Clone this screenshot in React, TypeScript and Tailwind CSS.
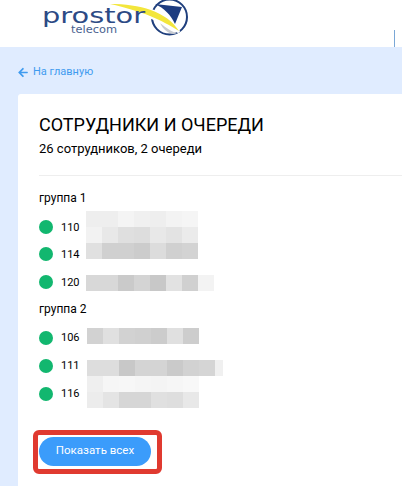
import { FaArrowLeft } from "react-icons/fa";

interface Queue {
  title: string;
  exts: string[];
  rowClass: string;
  maskClass: string;
  mask: string[][];
}

// blurred-out names, one array per 16px strip of pixels
const QUEUES: Queue[] = [
  {
    title: "группа 1",
    exts: ["110", "114", "120"],
    rowClass: "h-[27.5px]",
    maskClass: "pt-[4px]",
    mask: [
      ["bg-[#eeeeee]", "bg-[#eeeeee]", "bg-[#f4f4f4]", "bg-[#f0f0f0]", "bg-[#eeeeee]", "bg-[#f3f3f3]", "bg-[#f5f5f5]"],
      ["bg-[#f2f2f2]", "bg-[#e8e8e8]", "bg-[#dfdfdf]", "bg-[#dddddd]", "bg-[#e8e8e8]", "bg-[#e3e3e3]", "bg-[#ebebeb]"],
      ["bg-[#e0e0e0]", "bg-[#d0d0d0]", "bg-[#d0d0d0]", "bg-[#cccccc]", "bg-[#dcdcdc]", "bg-[#d0d0d0]", "bg-[#d3d3d3]"],
      [],
      ["bg-[#d8d8d8]", "bg-[#d8d8d8]", "bg-[#cacaca]", "bg-[#d4d4d4]", "bg-[#c8c8c8]", "bg-[#e2e2e2]", "bg-[#d0d0d0]", "bg-[#f3f3f3]"],
    ],
  },
  {
    title: "группа 2",
    exts: ["106", "111", "116"],
    rowClass: "h-[28px]",
    maskClass: "pt-[10px] pl-px",
    mask: [
      ["bg-[#d2d2d2]", "bg-[#e0e0e0]", "bg-[#d2d2d2]", "bg-[#d0d0d0]", "bg-[#cccccc]", "bg-[#e0e0e0]", "bg-[#cdcdcd]"],
      [],
      ["bg-[#dddddd]", "bg-[#dddddd]", "bg-[#c8c8c8]", "bg-[#d4d4d4]", "bg-[#d4d4d4]", "bg-[#cacaca]", "bg-[#d2d2d2]", "bg-[#d5d5d5]", "bg-[#f0f0f0] !w-2"],
      ["bg-[#efefef]", "bg-[#f6f6f6]", "bg-[#f7f7f7]", "bg-[#f5f5f5]", "bg-[#f4f4f4]", "bg-[#f6f6f6]", "bg-[#f8f8f8]"],
      ["bg-[#ececec]", "bg-[#e4e4e4]", "bg-[#d6d6d6]", "bg-[#d6d6d6]", "bg-[#e0e0e0]", "bg-[#dedede]", "bg-[#e8e8e8]"],
    ],
  },
];

function Logo() {
  return (
    <svg width="160" height="37" viewBox="0 0 160 37" className="ml-[38px]">
      <circle cx="131.5" cy="17" r="17.5" fill="none" stroke="#1f3f7d" strokeWidth="2" />
      <path d="M122 23 C128 28 134 32 139 33 C133 36 126 31 122 23 Z" fill="#c9ccd2" />
      <path d="M70 4 C102 4 128 11 141 32 C124 21 104 11 70 4 Z" fill="#fff" stroke="#fff" strokeWidth="3" />
      <path d="M72 4 C102 4 128 11 141 31 C124 20 104 11 72 4 Z" fill="#f3e63c" />
      <path d="M117 4 L144 7 L137 24 C133 15 126 8 117 4 Z" fill="#1d3c80" />
      <text
        x="4"
        y="23"
        fontFamily="'DejaVu Sans', sans-serif"
        fontSize="21"
        fill="#2c4a85"
        textLength="103"
        lengthAdjust="spacingAndGlyphs"
      >
        prostor
      </text>
      <text
        x="33"
        y="33"
        fontFamily="'DejaVu Sans', sans-serif"
        fontSize="11"
        fill="#4a6290"
        textLength="46"
        lengthAdjust="spacingAndGlyphs"
      >
        telecom
      </text>
    </svg>
  );
}

export default function App() {
  return (
    <div className="h-[486px] overflow-hidden bg-[#e0ecff] font-['Roboto',sans-serif] text-black">
      <header className="flex h-[47px] items-start justify-between bg-white pr-[7px]">
        <Logo />
        <div className="mt-[30px] h-[17px] w-px bg-[#7aa7d6]" />
      </header>

      <a className="flex h-[47px] items-center gap-[5px] pl-[18px] pt-[4px] text-[11px] text-[#3f9bef]">
        <FaArrowLeft className="h-[11px] w-[10px]" />
        <span>На главную</span>
      </a>

      <main className="ml-[18px] h-[392px] rounded-tl-[3px] bg-white pl-[21px] pt-[19px]">
        <h1 className="text-[18px] leading-[24px]">СОТРУДНИКИ И ОЧЕРЕДИ</h1>
        <p className="mt-[3px] text-[13px] leading-[17px]">26 сотрудников, 2 очереди</p>
        <div className="mt-[18px] h-px bg-[#eeeeee]" />

        <div className="mt-[14px] flex flex-col gap-[5px]">
          {QUEUES.map((queue) => (
            <section key={queue.title}>
              <div className="text-[12px] leading-[17px]">{queue.title}</div>
              <div className="flex">
                <ul className="w-[47px] pt-[6px]">
                  {queue.exts.map((ext) => (
                    <li key={ext} className={`flex items-center gap-2 text-[11px] ${queue.rowClass}`}>
                      <span className="h-[14px] w-[14px] rounded-full bg-[#12b76f]" />
                      <span className="pt-[2px]">{ext}</span>
                    </li>
                  ))}
                </ul>
                <div className={queue.maskClass}>
                  {queue.mask.map((strip, i) => (
                    <div key={i} className="flex h-4">
                      {strip.map((cell, j) => (
                        <div key={j} className={`w-4 ${cell}`} />
                      ))}
                    </div>
                  ))}
                </div>
              </div>
            </section>
          ))}
        </div>

        <div className="ml-[-6px] mt-[22px] w-fit rounded-[6px] border-[5px] border-[#e03a30] pb-[3px] pl-px pr-[6px] pt-[2px]">
          <button className="block h-[29px] w-[112px] rounded-full bg-[#3b9cfb] text-[11.5px] text-white">
            Показать всех
          </button>
        </div>
      </main>
    </div>
  );
}
